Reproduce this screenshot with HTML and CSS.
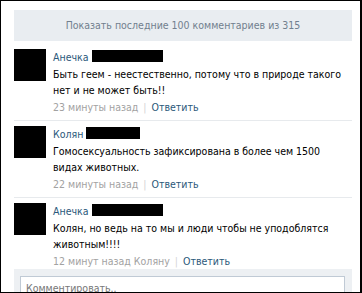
FILE: index.html
```html
<!DOCTYPE html>
<html lang="ru">
<head>
<meta charset="utf-8">
<link rel="stylesheet" href="styles.css">
</head>
<body>
<div class="frame">
  <div class="show-all">Показать последние 100 комментариев из 315</div>

  <div class="comment">
    <div class="avatar"></div>
    <div class="body">
      <div class="author"><a class="name">Анечка</a> <span class="redact wide"></span></div>
      <div class="text">Быть геем - неестественно, потому что в природе такого нет и не может быть!!</div>
      <div class="meta"><span class="date">23 минуты назад</span><span class="sep">|</span><a class="reply">Ответить</a></div>
    </div>
  </div>

  <div class="comment">
    <div class="avatar"></div>
    <div class="body">
      <div class="author"><a class="name">Колян</a> <span class="redact narrow"></span></div>
      <div class="text">Гомосексуальность зафиксирована в более чем 1500 видах животных.</div>
      <div class="meta"><span class="date">22 минуты назад</span><span class="sep">|</span><a class="reply">Ответить</a></div>
    </div>
  </div>

  <div class="comment last">
    <div class="avatar"></div>
    <div class="body">
      <div class="author"><a class="name">Анечка</a> <span class="redact wide"></span></div>
      <div class="text">Колян, но ведь на то мы и люди чтобы не уподоблятся животным!!!!</div>
      <div class="meta"><span class="date">12 минут назад Коляну</span><span class="sep">|</span><a class="reply">Ответить</a></div>
    </div>
  </div>

  <div class="composer">
    <div class="input">Комментировать..</div>
  </div>
</div>
</body>
</html>
```

FILE: styles.css
```css
html, body {
  margin: 0;
  padding: 0;
  background: #fff;
}

.frame {
  box-sizing: border-box;
  width: 362px;
  height: 293px;
  overflow: hidden;
  border-top: 1px solid #000;
  border-left: 1px solid #000;
  border-bottom: 1px solid #000;
  border-right: 2px solid #000;
  padding: 9px 8px 0 13px;
  font-family: "DejaVu Sans Condensed", "DejaVu Sans", sans-serif;
  font-size: 10.5px;
  color: #000;
}

.show-all {
  height: 31px;
  line-height: 31px;
  background: #e9edf1;
  color: #717f8e;
  text-align: center;
}

.comment {
  display: flex;
  padding: 8px 0 5px;
  border-bottom: 1px solid #e7eaed;
}

.comment + .comment {
  padding-top: 5px;
}

.comment.last {
  border-bottom: 0;
  padding-bottom: 0;
}

.avatar {
  flex: none;
  width: 32px;
  height: 32px;
  margin-top: 0;
  margin-right: 7px;
  background: #000;
}

.body {
  flex: 1;
  padding-right: 6px;
}

.author {
  line-height: 16px;
  height: 16px;
}

.name {
  color: #2b587a;
}

.redact {
  display: inline-block;
  height: 12px;
  background: #000;
  vertical-align: -1px;
}

.redact.wide { width: 71px; }
.redact.narrow { width: 54px; }

.text {
  margin-top: 1px;
  line-height: 16px;
}

.meta {
  margin-top: 1px;
  line-height: 16px;
}

.date {
  color: #a2a2a2;
}

.sep {
  color: #d4d4d4;
  margin: 0 5px;
}

.reply {
  color: #2b587a;
}

.composer {
  background: #edf0f3;
  padding: 7px 7px 0 6px;
  height: 30px;
}

.input {
  background: #fff;
  border: 1px solid #c0cad5;
  border-bottom: 0;
  height: 30px;
  padding: 4px 0 0 5px;
  color: #777;
  line-height: 14px;
}
```
